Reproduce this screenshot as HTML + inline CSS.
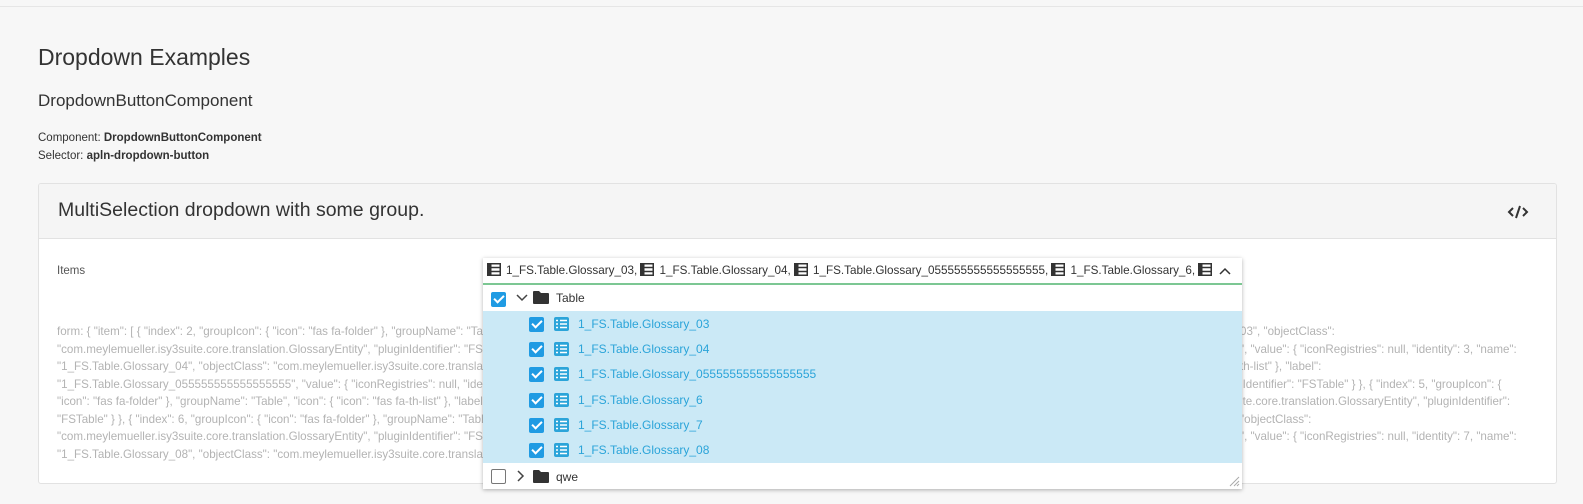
<!DOCTYPE html>
<html><head><meta charset="utf-8"><style>
*{box-sizing:border-box;margin:0;padding:0}
body{width:1583px;height:504px;overflow:hidden;background:#f7f7f7;font-family:"Liberation Sans",sans-serif;color:#333;position:relative}
.abs{position:absolute;white-space:nowrap}
.topline{position:absolute;left:0;top:6px;width:1583px;height:1px;background:#e6e6e6}
.card{position:absolute;left:38px;top:183px;width:1519px;height:301px;border:1px solid #e2e2e2;border-radius:3px;background:#fff;overflow:hidden}
.ch{height:55px;background:#f5f5f5;border-bottom:1px solid #e2e2e2}
.json{position:absolute;font-size:11.6px;color:#b3b3b3;line-height:17.5px;white-space:nowrap}
.dd{position:absolute;left:483px;top:258px;width:759px;height:231px;background:#fff;box-shadow:0 1px 4px rgba(0,0,0,.3)}
.inp{height:27px;border-bottom:2px solid #7cc793;font-size:11.7px;color:#333;padding:5px 0 0 4px;white-space:nowrap;overflow:hidden;position:relative}
.ti{display:inline-block;width:14px;height:13px;vertical-align:-2px;margin-right:5px}
.cb{position:absolute;width:15px;height:15px;border-radius:2px;background:#1f9be3}
.cb:after{content:"";position:absolute;left:3px;top:3px;width:8px;height:4px;border-left:2px solid #fff;border-bottom:2px solid #fff;transform:rotate(-45deg)}
.cbo{position:absolute;width:15px;height:15px;border:1px solid #777;border-radius:2px;background:#fff}
.hl{position:absolute;left:0;top:53px;width:759px;height:152px;background:#cbe9f6}
.it{position:absolute;left:95px;color:#2ba4d9;font-size:12px}
</style></head><body>
<div class="topline"></div>
<div class="abs" style="left:38px;top:44px;font-size:23px;color:#333">Dropdown Examples</div>
<div class="abs" style="left:38px;top:91px;font-size:17px;color:#333">DropdownButtonComponent</div>
<div class="abs" style="left:38px;top:132px;font-size:11.5px;color:#333">Component: <b>DropdownButtonComponent</b></div>
<div class="abs" style="left:38px;top:150px;font-size:11.5px;color:#333">Selector: <b>apln-dropdown-button</b></div>
<div class="card"><div class="ch"></div></div>
<div class="abs" style="left:58px;top:199px;font-size:19.5px;color:#333">MultiSelection dropdown with some group.</div>
<svg class="abs" style="left:1507px;top:204px" width="22" height="16" viewBox="0 0 22 16"><path d="M6 4L2 8l4 4M16 4l4 4-4 4M13 2L9 14" fill="none" stroke="#333" stroke-width="2"/></svg>
<div class="abs" style="left:57px;top:265px;font-size:11.5px;color:#555">Items</div>
<div class="json" style="left:57px;top:323px">form: { "item": [ { "index": 2, "groupIcon": { "icon": "fas fa-folder" }, "groupName": "Ta<br>"com.meylemueller.isy3suite.core.translation.GlossaryEntity", "pluginIdentifier": "FS<br>"1_FS.Table.Glossary_04", "objectClass": "com.meylemueller.isy3suite.core.transla<br>"1_FS.Table.Glossary_055555555555555555", "value": { "iconRegistries": null, "ide<br>"icon": "fas fa-folder" }, "groupName": "Table", "icon": { "icon": "fas fa-th-list" }, "label<br>"FSTable" } }, { "index": 6, "groupIcon": { "icon": "fas fa-folder" }, "groupName": "Tabl<br>"com.meylemueller.isy3suite.core.translation.GlossaryEntity", "pluginIdentifier": "FS<br>"1_FS.Table.Glossary_08", "objectClass": "com.meylemueller.isy3suite.core.transla</div>
<div class="json" style="left:1240px;top:323px">03", "objectClass":<br>", "value": { "iconRegistries": null, "identity": 3, "name":<br>th-list" }, "label":<br>lIdentifier": "FSTable" } }, { "index": 5, "groupIcon": {<br>ite.core.translation.GlossaryEntity", "pluginIdentifier":<br>"objectClass":<br>", "value": { "iconRegistries": null, "identity": 7, "name":</div>
<div class="dd">
<div class="inp">
<svg class="ti" viewBox="0 0 14 13"><rect x="0.75" y="0.75" width="12.5" height="11.5" fill="none" stroke="#333" stroke-width="1.5"/><rect x="0" y="0" width="4.5" height="13" fill="#333"/><path d="M0 4.5h14M0 8.5h14" stroke="#333" stroke-width="1.5"/></svg>1_FS.Table.Glossary_03, <svg class="ti" viewBox="0 0 14 13"><rect x="0.75" y="0.75" width="12.5" height="11.5" fill="none" stroke="#333" stroke-width="1.5"/><rect x="0" y="0" width="4.5" height="13" fill="#333"/><path d="M0 4.5h14M0 8.5h14" stroke="#333" stroke-width="1.5"/></svg>1_FS.Table.Glossary_04, <svg class="ti" viewBox="0 0 14 13"><rect x="0.75" y="0.75" width="12.5" height="11.5" fill="none" stroke="#333" stroke-width="1.5"/><rect x="0" y="0" width="4.5" height="13" fill="#333"/><path d="M0 4.5h14M0 8.5h14" stroke="#333" stroke-width="1.5"/></svg>1_FS.Table.Glossary_055555555555555555, <svg class="ti" viewBox="0 0 14 13"><rect x="0.75" y="0.75" width="12.5" height="11.5" fill="none" stroke="#333" stroke-width="1.5"/><rect x="0" y="0" width="4.5" height="13" fill="#333"/><path d="M0 4.5h14M0 8.5h14" stroke="#333" stroke-width="1.5"/></svg>1_FS.Table.Glossary_6, <svg class="ti" viewBox="0 0 14 13"><rect x="0.75" y="0.75" width="12.5" height="11.5" fill="none" stroke="#333" stroke-width="1.5"/><rect x="0" y="0" width="4.5" height="13" fill="#333"/><path d="M0 4.5h14M0 8.5h14" stroke="#333" stroke-width="1.5"/></svg>
<div style="position:absolute;left:733px;top:0;width:26px;height:25px;background:#fff"></div>
<svg style="position:absolute;left:736px;top:9px" width="12" height="8"><path d="M1 7l5-5 5 5" fill="none" stroke="#333" stroke-width="1.5"/></svg>
</div>
<div class="hl"></div>
<div class="cb" style="left:8px;top:34px"></div>
<svg style="position:absolute;left:33px;top:36px" width="12" height="8"><path d="M1 1l5 5 5-5" fill="none" stroke="#444" stroke-width="1.5"/></svg>
<svg style="position:absolute;left:50px;top:32px" width="16" height="14"><path d="M0 2q0-1 1-1h5l2 2h7q1 0 1 1v9q0 1-1 1H1q-1 0-1-1z" fill="#333"/></svg>
<div class="abs" style="left:73px;top:33px;font-size:12px;color:#333">Table</div>
<div class="cb" style="left:46px;top:59px"></div><svg style="position:absolute;left:71px;top:59px" width="15" height="14"><rect x="0" y="0" width="15" height="14" rx="2" fill="#2ba4d9"/><path d="M2 3.5h2M2 7h2M2 10.5h2M6 3.5h7M6 7h7M6 10.5h7" stroke="#fff" stroke-width="1.6"/></svg><div class="it" style="top:59px">1_FS.Table.Glossary_03</div>
<div class="cb" style="left:46px;top:84px"></div><svg style="position:absolute;left:71px;top:84px" width="15" height="14"><rect x="0" y="0" width="15" height="14" rx="2" fill="#2ba4d9"/><path d="M2 3.5h2M2 7h2M2 10.5h2M6 3.5h7M6 7h7M6 10.5h7" stroke="#fff" stroke-width="1.6"/></svg><div class="it" style="top:84px">1_FS.Table.Glossary_04</div>
<div class="cb" style="left:46px;top:109px"></div><svg style="position:absolute;left:71px;top:109px" width="15" height="14"><rect x="0" y="0" width="15" height="14" rx="2" fill="#2ba4d9"/><path d="M2 3.5h2M2 7h2M2 10.5h2M6 3.5h7M6 7h7M6 10.5h7" stroke="#fff" stroke-width="1.6"/></svg><div class="it" style="top:109px">1_FS.Table.Glossary_055555555555555555</div>
<div class="cb" style="left:46px;top:135px"></div><svg style="position:absolute;left:71px;top:135px" width="15" height="14"><rect x="0" y="0" width="15" height="14" rx="2" fill="#2ba4d9"/><path d="M2 3.5h2M2 7h2M2 10.5h2M6 3.5h7M6 7h7M6 10.5h7" stroke="#fff" stroke-width="1.6"/></svg><div class="it" style="top:135px">1_FS.Table.Glossary_6</div>
<div class="cb" style="left:46px;top:160px"></div><svg style="position:absolute;left:71px;top:160px" width="15" height="14"><rect x="0" y="0" width="15" height="14" rx="2" fill="#2ba4d9"/><path d="M2 3.5h2M2 7h2M2 10.5h2M6 3.5h7M6 7h7M6 10.5h7" stroke="#fff" stroke-width="1.6"/></svg><div class="it" style="top:160px">1_FS.Table.Glossary_7</div>
<div class="cb" style="left:46px;top:185px"></div><svg style="position:absolute;left:71px;top:185px" width="15" height="14"><rect x="0" y="0" width="15" height="14" rx="2" fill="#2ba4d9"/><path d="M2 3.5h2M2 7h2M2 10.5h2M6 3.5h7M6 7h7M6 10.5h7" stroke="#fff" stroke-width="1.6"/></svg><div class="it" style="top:185px">1_FS.Table.Glossary_08</div>
<div class="cbo" style="left:8px;top:211px"></div>
<svg style="position:absolute;left:34px;top:212px" width="8" height="12"><path d="M1 1l5 5-5 5" fill="none" stroke="#444" stroke-width="1.5"/></svg>
<svg style="position:absolute;left:50px;top:211px" width="16" height="14"><path d="M0 2q0-1 1-1h5l2 2h7q1 0 1 1v9q0 1-1 1H1q-1 0-1-1z" fill="#333"/></svg>
<div class="abs" style="left:73px;top:212px;font-size:12px;color:#333">qwe</div>
<svg style="position:absolute;left:746px;top:218px" width="11" height="11"><path d="M10 1L1 10M10 5L5 10M10 8L8 10" stroke="#aaa"/></svg>
</div>
</body></html>
